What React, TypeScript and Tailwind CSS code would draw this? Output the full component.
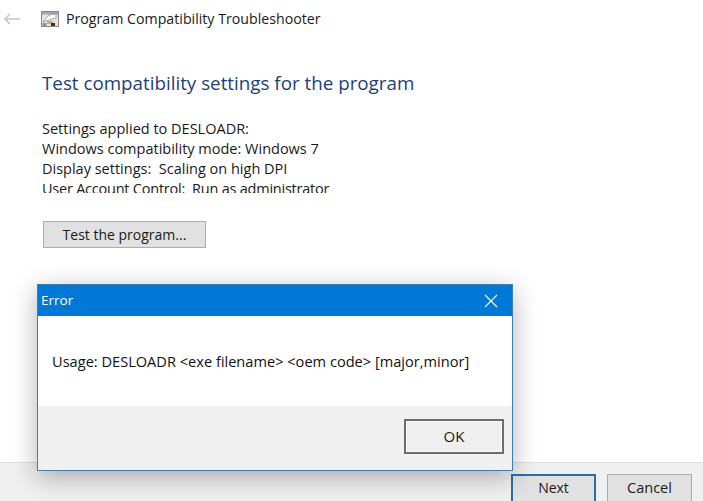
import React from "react";

function ProgIcon() {
  return (
    <svg width="20" height="18" viewBox="0 0 20 18" className="shrink-0">
      <rect x="1.5" y="1.5" width="17" height="15" fill="#e4e4e4" stroke="#8a8a8a" />
      <rect x="2" y="2" width="16" height="2.5" fill="#9fa7b0" />
      <path d="M3 12 L9 5 L16 4 L16 8 L9 10 Z" fill="#fff" stroke="#7f8a96" strokeWidth="0.7" />
      <rect x="7" y="11" width="6" height="3" fill="#c9b560" />
      <rect x="11" y="13" width="4" height="3" fill="#333" />
      <rect x="2.5" y="13" width="4" height="3" fill="#8f8f8f" />
    </svg>
  );
}

export default function App() {
  return (
    <div className="relative flex h-[501px] w-[703px] flex-col overflow-hidden bg-white font-['Open_Sans','Noto_Sans',sans-serif] text-[#1a1a1a]">
      <header className="flex h-[37px] items-center">
        <svg width="18" height="12" viewBox="0 0 18 12" className="ml-[3px] shrink-0" fill="none" stroke="#c4c4c4" strokeWidth="1.5">
          <path d="M17 6H2M7 1 2 6l5 5" />
        </svg>
        <div className="ml-[19px]"><ProgIcon /></div>
        <span className="ml-[6px] text-[14.2px]">Program Compatibility Troubleshooter</span>
      </header>

      <main className="flex-1 pl-[42px]">
        <h1 className="mt-[32px] text-[18.8px] leading-[28px] text-[#1c3f78]">Test compatibility settings for the program</h1>
        <div className="mt-[22px] h-[74px] overflow-hidden text-[14.5px] leading-[20px]">
          <p>Settings applied to DESLOADR:</p>
          <p>Windows compatibility mode: Windows 7</p>
          <p className="whitespace-pre">Display settings:  Scaling on high DPI</p>
          <p className="whitespace-pre tracking-[-0.23px]">User Account Control:  Run as administrator</p>
        </div>
        <button className="mt-[28px] ml-px h-[27px] w-[163px] border border-[#adadad] bg-[#e1e1e1] text-[14px]">Test the program...</button>
      </main>

      <footer className="flex h-[39px] justify-end gap-[11px] border-t border-[#dfdfdf] bg-[#f0f0f0] pt-[11px] pr-[11px]">
        <button className="h-[34px] w-[85px] border-2 border-[#2a6ea8] bg-[#e1e1e1] pb-[8px] text-[14px]">Next</button>
        <button className="h-[34px] w-[85px] border border-[#adadad] bg-[#e1e1e1] pb-[6px] text-[14.5px]">Cancel</button>
      </footer>

      <section className="absolute top-[284px] left-[37px] flex h-[187px] w-[476px] flex-col border border-[#3d7fb0] bg-white shadow-[0_6px_24px_rgba(0,0,0,0.3)]">
        <div className="flex h-[31px] items-center justify-between bg-[#0078d7] pr-[14px] pl-[3px] text-white">
          <span className="text-[13.5px]">Error</span>
          <svg width="14" height="14" viewBox="0 0 14 14" fill="none" stroke="#fff" strokeWidth="1.1">
            <path d="M1 1l12 12M13 1 1 13" />
          </svg>
        </div>
        <div className="h-[90px] pt-[35px] pl-[14px] text-[14.6px] leading-[20px] text-[#111]">
          Usage: DESLOADR &lt;exe filename&gt; &lt;oem code&gt; [major,minor]
        </div>
        <div className="flex flex-1 items-start justify-end bg-[#f0f0f0] pt-[13px] pr-[8px]">
          <button className="h-[35px] w-[100px] border-2 border-[#6d6d6d] bg-[#efefef] text-[15px] shadow-[inset_0_0_0_1px_#fff]">OK</button>
        </div>
      </section>
    </div>
  );
}
